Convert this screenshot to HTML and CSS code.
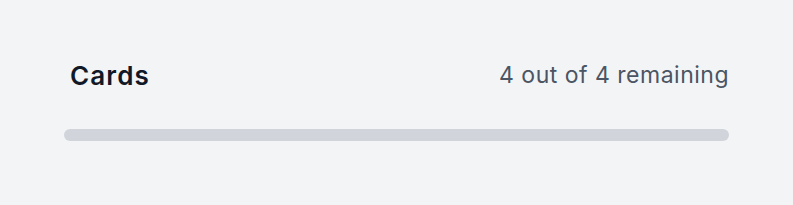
FILE: index.html
```html
<!DOCTYPE html>
<html>
<head>
<meta charset="utf-8">
<link rel="stylesheet" href="styles.css">
</head>
<body>
<div class="panel">
  <div class="header">
    <span class="title">Cards</span>
    <span class="count">4 out of 4 remaining</span>
  </div>
  <div class="track"></div>
</div>
</body>
</html>
```

FILE: styles.css
```css
html, body {
  margin: 0;
  padding: 0;
  background: #f3f4f6;
  font-family: Inter, "Noto Sans", sans-serif;
}
.panel {
  padding: 55px 64px 0 64px;
}
.header {
  display: flex;
  justify-content: space-between;
  align-items: center;
  padding-left: 6px;
  height: 40px;
}
.title {
  font-size: 26px;
  font-weight: 600;
  letter-spacing: 1.1px;
  color: #111827;
}
.count {
  font-size: 23px;
  letter-spacing: 0.5px;
  color: #4b5563;
}
.track {
  margin-top: 34px;
  height: 12px;
  border-radius: 6px;
  background: #d1d5db;
}
```
